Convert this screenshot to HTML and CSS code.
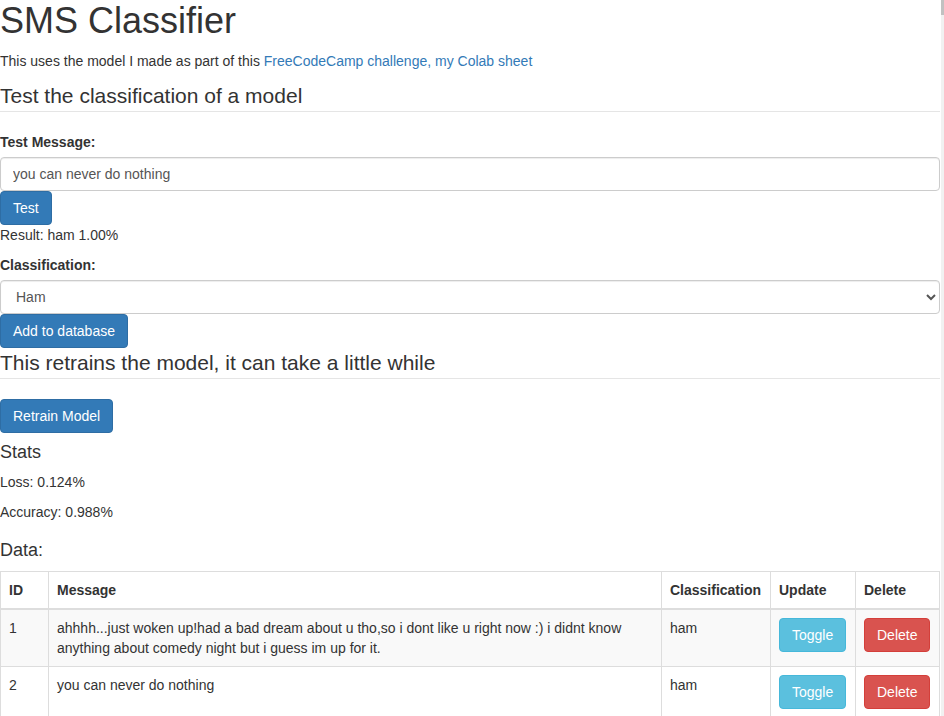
FILE: index.html
```html
<!DOCTYPE html>
<html lang="en">
<head>
<meta charset="utf-8">
<title>SMS Classifier</title>
<link rel="stylesheet" href="styles.css">
</head>
<body>
<div class="page">
  <h1 class="title">SMS Classifier</h1>
  <p class="intro">This uses the model I made as part of this <a href="#">FreeCodeCamp challenge</a><a href="#">, my Colab sheet</a></p>

  <form class="form">
    <fieldset class="fieldset">
      <legend class="legend">Test the classification of a model</legend>
      <label class="label" for="msg">Test Message:</label>
      <input class="control" id="msg" type="text" value="you can never do nothing">
      <button type="button" class="btn btn-primary">Test</button>
      <p class="result">Result: ham 1.00%</p>
      <label class="label" for="cls">Classification:</label>
      <select class="control select" id="cls">
        <option>Ham</option>
        <option>Spam</option>
      </select>
      <button type="button" class="btn btn-primary">Add to database</button>
    </fieldset>
    <fieldset class="fieldset">
      <legend class="legend">This retrains the model, it can take a little while</legend>
      <button type="button" class="btn btn-primary">Retrain Model</button>
    </fieldset>
  </form>

  <h4 class="h4">Stats</h4>
  <p class="stat">Loss: 0.124%</p>
  <p class="stat">Accuracy: 0.988%</p>

  <h4 class="h4 data-title">Data:</h4>
  <table class="table">
    <colgroup>
      <col class="c-id">
      <col>
      <col class="c-cls">
      <col class="c-upd">
      <col class="c-del">
    </colgroup>
    <thead>
      <tr><th>ID</th><th>Message</th><th>Classification</th><th>Update</th><th>Delete</th></tr>
    </thead>
    <tbody>
      <tr class="odd">
        <td>1</td>
        <td>ahhhh...just woken up!had a bad dream about u tho,so i dont like u right now :) i didnt know anything about comedy night but i guess im up for it.</td>
        <td>ham</td>
        <td><button type="button" class="btn btn-info">Toggle</button></td>
        <td><button type="button" class="btn btn-danger">Delete</button></td>
      </tr>
      <tr>
        <td>2</td>
        <td>you can never do nothing</td>
        <td>ham</td>
        <td><button type="button" class="btn btn-info">Toggle</button></td>
        <td><button type="button" class="btn btn-danger">Delete</button></td>
      </tr>
    </tbody>
  </table>
</div>
<div class="scrollbar"><div class="thumb"></div></div>
</body>
</html>
```
FILE: styles.css
```css
html {
  overflow: hidden;
}
body {
  margin: 0;
  font-family: "Liberation Sans", Arial, Helvetica, sans-serif;
  font-size: 14px;
  line-height: 1.42857143;
  color: #333;
  background: #fff;
}
.page {
  width: 940px;
  padding-top: 1px;
}
.title {
  font-size: 36px;
  font-weight: 500;
  line-height: 1.1;
  margin: 0 0 10px;
}
.intro {
  margin: 0 0 10px;
}
.intro a {
  color: #337ab7;
  text-decoration: none;
}
.form {
  margin: 0;
}
.fieldset {
  margin: 0;
  padding: 0;
  border: 0;
  min-width: 0;
}
.legend {
  display: block;
  width: 100%;
  padding: 0;
  margin-bottom: 20px;
  font-size: 21px;
  line-height: inherit;
  color: #333;
  border-bottom: 1px solid #e5e5e5;
}
.label {
  display: inline-block;
  max-width: 100%;
  margin-bottom: 5px;
  font-weight: bold;
}
.control {
  display: block;
  box-sizing: border-box;
  width: 100%;
  height: 34px;
  padding: 6px 12px;
  font-family: inherit;
  font-size: 14px;
  line-height: 1.42857143;
  color: #555;
  background-color: #fff;
  border: 1px solid #ccc;
  border-radius: 4px;
  box-shadow: inset 0 1px 1px rgba(0, 0, 0, .075);
  margin: 0;
}
.select {
  padding: 6px 11px;
}
.result {
  margin: 0 0 10px;
}
.btn {
  display: inline-block;
  box-sizing: border-box;
  height: 34px;
  padding: 6px 12px;
  margin: 0;
  font-family: inherit;
  font-size: 14px;
  font-weight: 400;
  line-height: 1.42857143;
  text-align: center;
  white-space: nowrap;
  vertical-align: middle;
  border: 1px solid transparent;
  border-radius: 4px;
  color: #fff;
  cursor: pointer;
}
.fieldset > .btn {
  display: block;
}
.btn-primary {
  background-color: #337ab7;
  border-color: #2e6da4;
}
.btn-info {
  background-color: #5bc0de;
  border-color: #46b8da;
}
.btn-danger {
  background-color: #d9534f;
  border-color: #d43f3a;
}
.h4 {
  font-size: 18px;
  font-weight: 500;
  line-height: 1.1;
  margin: 10px 0;
}
.stat {
  margin: 0 0 10px;
}
.data-title {
  margin-top: 19px;
}
.table {
  width: 100%;
  border-collapse: collapse;
  border-spacing: 0;
  table-layout: fixed;
  border: 1px solid #ddd;
  margin-bottom: 20px;
}
.c-id {
  width: 48px;
}
.c-cls {
  width: 109px;
}
.c-upd {
  width: 85px;
}
.c-del {
  width: 84px;
}
.table th,
.table td {
  padding: 8px;
  line-height: 1.42857143;
  vertical-align: top;
  text-align: left;
  border: 1px solid #ddd;
}
.table th {
  vertical-align: bottom;
  font-weight: bold;
  border-bottom: 2px solid #ddd;
}
.table tr.odd td {
  background-color: #f9f9f9;
}
.scrollbar {
  position: fixed;
  top: 0;
  right: 0;
  width: 3px;
  height: 100%;
  background: #f1f1f1;
}
.thumb {
  height: 15px;
  background: #c1c1c1;
}
```
